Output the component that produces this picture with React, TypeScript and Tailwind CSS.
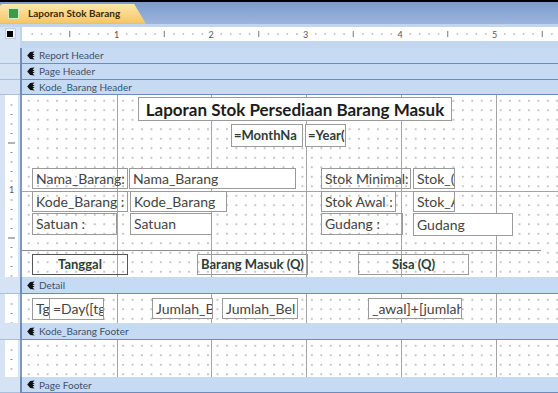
import React from 'react'

// section selector glyph shown at the start of each band bar
function Hand() {
    return (
        <svg width="8" height="9" viewBox="0 0 8 9" className="shrink-0">
            <path d="M7.6 0.4 L3.2 0.9 L0.2 4.5 L3.2 8.1 L7.6 8.6 L5.6 6.6 L7.6 5.6 L5.4 4.6 L7.6 3.5 L5.6 2.4 Z" fill="#111" />
        </svg>
    )
}

function Band({ label, tall }: { label: string; tall?: boolean }) {
    return (
        <div className={`flex ${tall ? 'h-[17px]' : 'h-[16px]'}`}>
            <div className="w-[20px] border-b border-[#a9bfe0] bg-[#d5e3f5]" />
            <div className="w-[2px] bg-[#6f8ab8]" />
            <div className="flex flex-1 items-center gap-[4px] border-b border-[#6d8bbb] bg-[#c6daf3] pl-[5px] text-[10px] leading-none text-[#40506e]">
                <Hand />
                <span>{label}</span>
            </div>
        </div>
    )
}

function VRuler({ height }: { height: number }) {
    const ticks = []
    for (let i = 1; i * 9.5 < height; i++) {
        const y = i * 9.5
        if (i % 10 === 0) {
            ticks.push(
                <text key={i} x="11.5" y={y + 3} fontSize="9" textAnchor="middle" fill="#555">
                    {i / 10}
                </text>
            )
        } else if (i % 5 === 0) {
            ticks.push(<rect key={i} x="8" y={y} width="7" height="1" fill="#666" />)
        } else {
            ticks.push(<rect key={i} x="10.5" y={y} width="2" height="1" fill="#8a8a8a" />)
        }
    }
    return (
        <div className="w-[20px] bg-[#d5e3f5]">
            <svg width="20" height={height}>
                <rect x="5" y="0" width="13" height={height} fill="#fff" />
                {ticks}
            </svg>
        </div>
    )
}

function TopRuler() {
    const marks = []
    for (let i = 1; i < 57; i++) {
        const x = i * 9.45
        if (i % 10 === 0) {
            marks.push(
                <text key={i} x={x} y="10.5" fontSize="9" textAnchor="middle" fill="#555">
                    {i / 10}
                </text>
            )
        } else if (i % 5 === 0) {
            marks.push(<rect key={i} x={x} y="4" width="1" height="6" fill="#777" />)
        } else {
            marks.push(<rect key={i} x={x} y="6.5" width="1.5" height="1" fill="#8c8c8c" />)
        }
    }
    return (
        <svg width="536" height="14" className="bg-white">
            {marks}
        </svg>
    )
}

function GridLines() {
    return (
        <>
            <div className="absolute top-0 bottom-0 left-[95px] w-px bg-[#a4a4a4]" />
            <div className="absolute top-0 bottom-0 left-[189px] w-px bg-[#a4a4a4]" />
            <div className="absolute top-0 bottom-0 left-[284px] w-px bg-[#a4a4a4]" />
            <div className="absolute top-0 bottom-0 left-[379px] w-px bg-[#a4a4a4]" />
            <div className="absolute top-0 bottom-0 left-[474px] w-px bg-[#a4a4a4]" />
        </>
    )
}

function Section({ h, height, children }: { h: string; height: number; children?: React.ReactNode }) {
    return (
        <div className={`flex ${h}`}>
            <VRuler height={height} />
            <div className="w-[2px] bg-[#7f98c2]" />
            <div className="relative flex-1 overflow-hidden bg-white bg-[radial-gradient(circle,#9c9c9c_0.55px,transparent_0.85px)] bg-[length:9.45px_9.5px] bg-[position:2px_1px]">
                <GridLines />
                {children}
            </div>
        </div>
    )
}

const label = 'absolute flex items-center border border-[#9a9a9a] pl-[3px] text-[14px] leading-none text-[#444] whitespace-nowrap overflow-hidden'
const field = 'absolute flex items-center border border-[#9a9a9a] bg-white pl-[3px] text-[14px] leading-none text-[#444] whitespace-nowrap overflow-hidden'
const head = 'absolute flex items-center justify-center border text-[13px] font-bold leading-none text-[#2f3d36] whitespace-nowrap'

export default function App() {
    return (
        <div className="flex h-[393px] w-[558px] flex-col overflow-hidden bg-[#c4d6ef] [font-family:Lato,sans-serif]">
            <div className="h-[2px] bg-black" />
            <div className="flex h-[22px] items-end bg-gradient-to-b from-[#7c9bcc] to-[#9cb5dd]">
                <div className="flex h-[20px] w-[146px] items-center gap-[9px] rounded-tl-[3px] bg-gradient-to-b from-[#fde7ab] to-[#f5c45f] pl-[8px] text-[10px] font-bold text-[#3a2b06] [clip-path:polygon(0_0,134px_0,146px_100%,0_100%)]">
                    <div className="h-[11px] w-[11px] border border-[#cfeec0] bg-[#3f9a45]" />
                    <span>Laporan Stok Barang</span>
                </div>
            </div>
            <div className="h-[3px] bg-[#c3d5ee]" />

            <div className="flex h-[14px]">
                <div className="flex w-[20px] items-center justify-center bg-[#d5e3f5]">
                    <div className="flex h-[11px] w-[11px] items-center justify-center border border-[#b9cbe6] bg-[#eef3fb]">
                        <div className="h-[6px] w-[6px] bg-black" />
                    </div>
                </div>
                <div className="w-[2px] bg-[#c3d5ee]" />
                <TopRuler />
            </div>
            <div className="flex h-[7px]">
                <div className="w-[20px] bg-[#d5e3f5]" />
                <div className="flex-1 bg-[#c3d6f0]" />
            </div>

            <Band label="Report Header" />
            <Band label="Page Header" />
            <Band label="Kode_Barang Header" />

            <Section h="h-[182px]" height={182}>
                <div className="absolute top-[96px] left-0 right-0 h-px bg-[#a4a4a4]" />

                <div className="absolute top-[2px] left-[116px] flex h-[24px] w-[314px] items-center justify-center border border-[#9a9a9a] bg-white text-[17px] font-bold leading-none text-[#1d1d1d]">
                    Laporan Stok Persediaan Barang Masuk
                </div>
                <div className="absolute top-[29px] left-[209px] flex h-[23px] w-[72px] items-center border border-[#9a9a9a] bg-white pl-[2px] text-[13px] font-bold leading-none text-[#2f3d36] overflow-hidden whitespace-nowrap">
                    =MonthNa
                </div>
                <div className="absolute top-[29px] left-[283px] flex h-[23px] w-[41px] items-center border border-[#9a9a9a] bg-white pl-[2px] text-[13px] font-bold leading-none text-[#2f3d36] overflow-hidden whitespace-nowrap">
                    =Year(
                </div>

                <div className={`${label} top-[73px] left-[10px] h-[21px] w-[96px]`}>Nama_Barang:</div>
                <div className={`${field} top-[73px] left-[107px] h-[21px] w-[167px]`}>Nama_Barang</div>
                <div className={`${label} top-[73px] left-[299px] h-[21px] w-[90px] text-[13.5px] pl-[2px]`}>Stok Minimal:</div>
                <div className={`${field} top-[73px] left-[391px] h-[21px] w-[42px]`}>Stok_(</div>

                <div className={`${label} top-[96px] left-[10px] h-[21px] w-[96px]`}>Kode_Barang :</div>
                <div className={`${field} top-[96px] left-[108px] h-[21px] w-[97px]`}>Kode_Barang</div>
                <div className={`${label} top-[96px] left-[299px] h-[21px] w-[75px]`}>Stok Awal :</div>
                <div className={`${field} top-[96px] left-[391px] h-[21px] w-[42px]`}>Stok_A</div>

                <div className={`${label} top-[118px] left-[10px] h-[22px] w-[85px]`}>Satuan :</div>
                <div className={`${field} top-[118px] left-[108px] h-[22px] w-[82px]`}>Satuan</div>
                <div className={`${label} top-[118px] left-[299px] h-[22px] w-[82px]`}>Gudang :</div>
                <div className={`${field} top-[118px] left-[391px] h-[23px] w-[100px]`}>Gudang</div>

                <div className="absolute top-[155px] left-0 h-px w-[519px] bg-[#8c8c8c]" />

                <div className={`${head} top-[159px] left-[10px] h-[21px] w-[96px] border-[#555]`}>Tanggal</div>
                <div className={`${head} top-[159px] left-[175px] h-[21px] w-[111px] border-[#9a9a9a]`}>Barang Masuk (Q)</div>
                <div className={`${head} top-[159px] left-[336px] h-[21px] w-[111px] border-[#9a9a9a]`}>Sisa (Q)</div>
            </Section>

            <Band label="Detail" tall />

            <Section h="h-[29px]" height={29}>
                <div className={`${field} top-[4px] left-[10px] h-[22px] w-[18px] pl-[1px] text-[12.5px]`}>Tg</div>
                <div className={`${field} top-[4px] left-[27px] h-[22px] w-[55px] pl-[1px] text-[13px]`}>=Day([tg(</div>
                <div className={`${field} top-[4px] left-[130px] h-[21px] w-[61px] text-[13px]`}>Jumlah_B</div>
                <div className={`${field} top-[4px] left-[200px] h-[21px] w-[76px] text-[13px]`}>Jumlah_Bel</div>
                <div className={`${field} top-[4px] left-[346px] h-[21px] w-[94px] pl-[1px] text-[13px]`}>_awal]+[jumlah</div>
            </Section>

            <Band label="Kode_Barang Footer" tall />

            <Section h="h-[37px]" height={37} />

            <Band label="Page Footer" />
        </div>
    )
}
